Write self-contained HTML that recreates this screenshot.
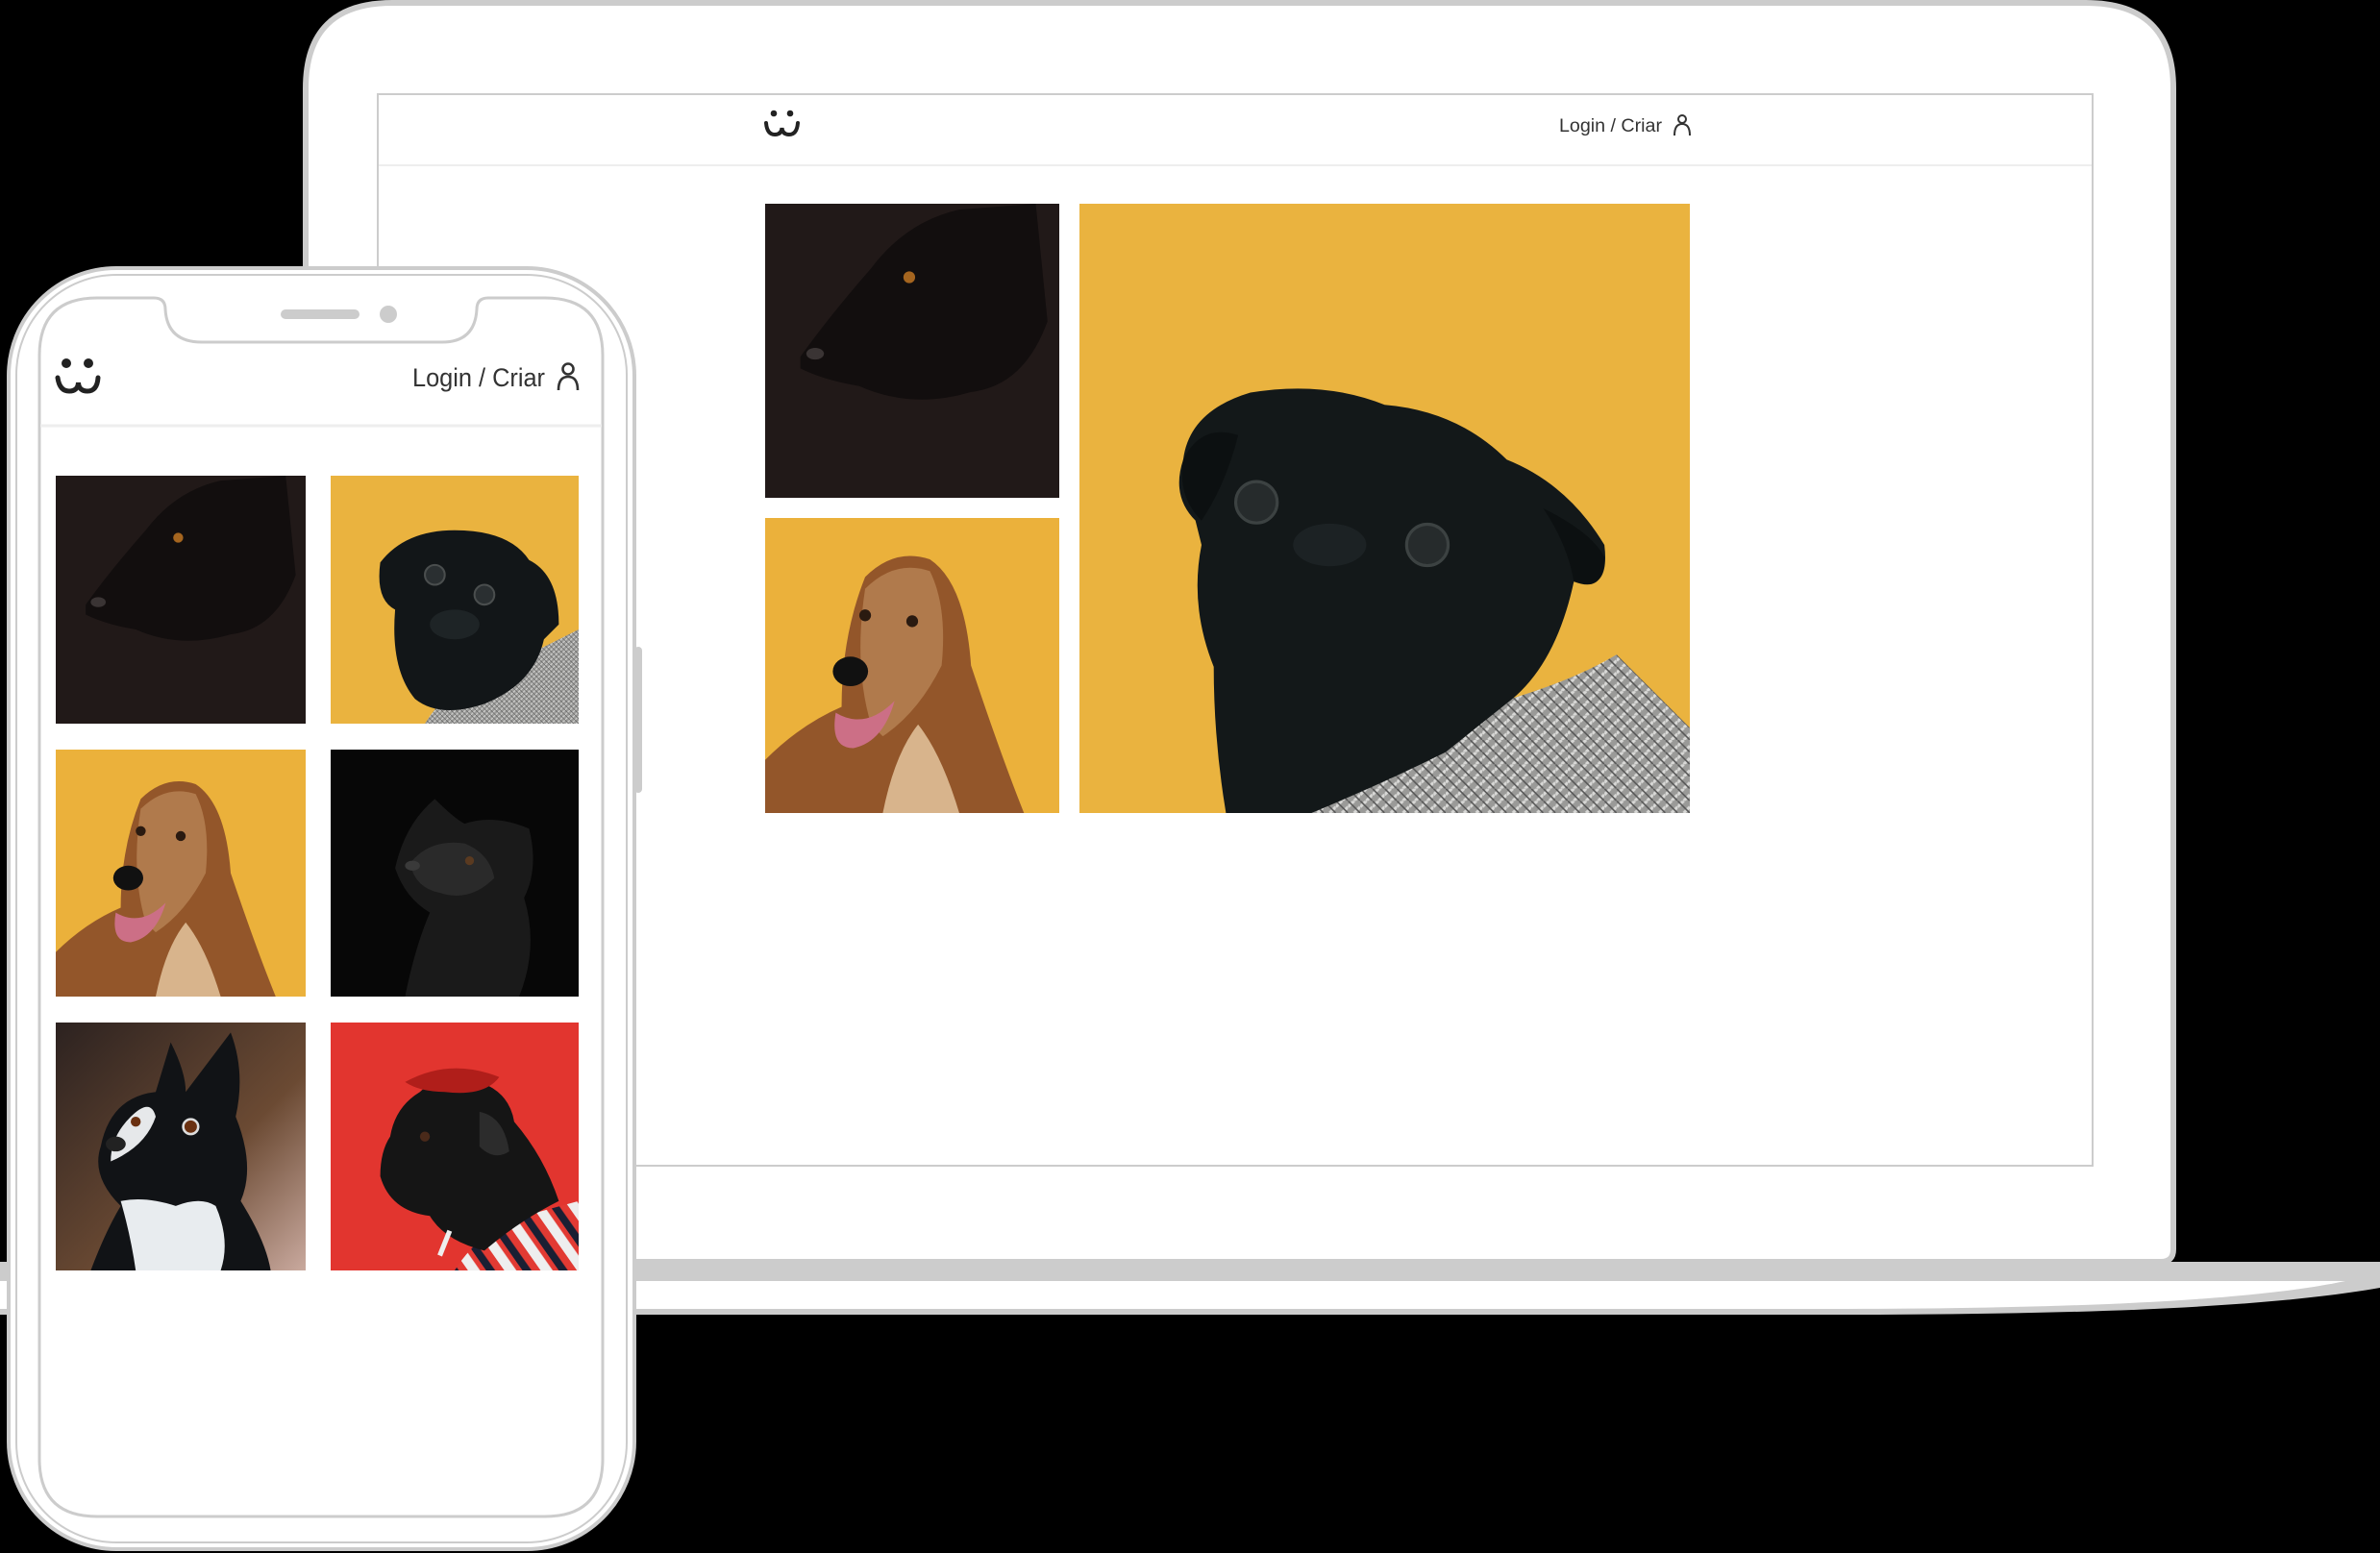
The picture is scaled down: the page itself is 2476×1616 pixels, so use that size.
<!DOCTYPE html>
<html><head><meta charset="utf-8"><style>html,body{margin:0;padding:0;background:#000;}svg{display:block}</style></head>
<body>
<svg width="2476" height="1616" viewBox="0 0 2476 1616" xmlns="http://www.w3.org/2000/svg" font-family="Liberation Sans, sans-serif">
<defs>
<pattern id="knit" width="2" height="2" patternUnits="userSpaceOnUse"><rect width="2" height="2" fill="#9a9a98"/><path d="M0 1 L1 0 M1 2 L2 1" stroke="#d8d8d6" stroke-width="0.5"/><path d="M0 0 L2 2" stroke="#555" stroke-width="0.25"/></pattern>
<pattern id="stripe" width="12" height="12" patternUnits="userSpaceOnUse" patternTransform="rotate(-35)"><rect width="12" height="12" fill="#e23a33"/><rect width="4" height="12" fill="#eee"/><rect x="6" width="3" height="12" fill="#1a1f33"/></pattern>

<g id="dogA">
<rect width="100" height="100" fill="#211918"/>
<path d="M12 52 Q22 38 36 22 Q48 6 66 2 L92 0 L96 40 Q88 62 70 64 Q50 70 32 62 Q20 60 12 56 Z" fill="#120e0e"/>
<circle cx="49" cy="25" r="2" fill="#a5651f"/>
<ellipse cx="17" cy="51" rx="3" ry="2" fill="#3a3434"/>
</g>
<g id="dogB">
<rect width="100" height="100" fill="#eab33f"/>
<path d="M38 100 Q50 80 80 72 L100 62 L100 100 Z" fill="url(#knit)"/>
<path d="M20 35 Q30 22 50 22 Q72 22 80 34 Q92 40 92 60 L86 66 Q82 84 62 92 Q44 98 34 90 Q24 78 26 54 Q18 50 20 35 Z" fill="#121618"/>
<circle cx="42" cy="40" r="4" fill="#2a2f31" stroke="#4a4e4e" stroke-width="0.8"/>
<circle cx="62" cy="48" r="4" fill="#2a2f31" stroke="#4a4e4e" stroke-width="0.8"/>
<ellipse cx="50" cy="60" rx="10" ry="6" fill="#1e2426"/>
</g>
<g id="dogC">
<rect width="100" height="100" fill="#ebb13b"/>
<path d="M0 100 L0 82 Q12 70 26 64 Q26 40 34 20 Q44 10 56 14 Q68 22 70 50 Q80 80 88 100 Z" fill="#93562a"/>
<path d="M36 70 Q30 50 34 24 Q44 14 56 18 Q62 30 60 50 Q52 66 40 74 Z" fill="#b07a4c"/>
<path d="M40 100 Q44 80 52 70 Q60 80 66 100 Z" fill="#d8b48c"/>
<ellipse cx="29" cy="52" rx="6" ry="5" fill="#111"/>
<circle cx="34" cy="33" r="2" fill="#2a1a10"/><circle cx="50" cy="35" r="2" fill="#2a1a10"/>
<path d="M24 66 Q34 72 44 62 Q40 76 30 78 Q22 78 24 66 Z" fill="#cc6f86"/>
</g>
<g id="dogD">
<rect width="100" height="100" fill="#070707"/>
<path d="M26 48 Q30 30 42 20 Q50 28 54 30 Q66 26 80 32 Q84 48 78 60 Q84 80 76 100 L30 100 Q34 80 40 66 Q30 60 26 48 Z" fill="#1a1a1a"/>
<path d="M32 46 Q40 36 54 38 Q64 42 66 52 Q56 62 44 58 Q34 56 32 46 Z" fill="#2a2a2a"/>
<circle cx="56" cy="45" r="1.8" fill="#5a3a20"/>
<ellipse cx="33" cy="47" rx="3" ry="2" fill="#3a3a3a"/>
</g>
<g id="dogE">
<defs><linearGradient id="gE" x1="0" y1="0" x2="1" y2="1"><stop offset="0" stop-color="#2c2220"/><stop offset="0.6" stop-color="#6b4a33"/><stop offset="1" stop-color="#c9a99e"/></linearGradient></defs>
<rect width="100" height="100" fill="url(#gE)"/>
<path d="M18 50 Q22 30 40 28 L46 8 Q52 20 52 28 L70 4 Q76 20 72 38 Q80 58 74 72 Q84 88 86 100 L14 100 Q20 84 26 74 Q14 62 18 50 Z" fill="#111316"/>
<path d="M26 72 Q36 70 48 74 Q58 70 64 74 Q70 88 66 100 L32 100 Q30 86 26 72 Z" fill="#e8ecef"/>
<path d="M30 38 Q38 30 40 38 Q36 50 22 56 Q22 46 30 38 Z" fill="#e6e8ea"/>
<circle cx="54" cy="42" r="3" fill="#6a3010" stroke="#ddd" stroke-width="1"/>
<circle cx="32" cy="40" r="2" fill="#6a3010"/>
<ellipse cx="24" cy="49" rx="4" ry="3" fill="#222"/>
</g>
<g id="dogF">
<rect width="100" height="100" fill="#e2352f"/>
<path d="M50 100 Q60 84 78 78 L100 72 L100 100 Z" fill="url(#stripe)"/>
<path d="M36 28 Q46 18 60 24 Q72 28 74 40 Q86 54 92 72 Q76 80 62 92 Q46 88 40 78 Q24 76 20 62 Q20 52 24 46 Q26 34 36 28 Z" fill="#151515"/>
<path d="M30 24 Q48 14 68 22 Q62 30 46 28 Q36 28 30 24 Z" fill="#b01e1a"/>
<path d="M60 36 Q70 38 72 52 Q66 56 60 50 Z" fill="#2c2c2c"/>
<circle cx="38" cy="46" r="2" fill="#4a2a1a"/>
<path d="M48 84 L44 94" stroke="#eee" stroke-width="2"/>
</g>
</defs>

<rect width="2476" height="1616" fill="#000"/>

<!-- Laptop -->
<path d="M0 1313 L2476 1313 L2476 1340 C2350 1362 2150 1368 1900 1368 L0 1368 Z" fill="#cccccc"/>
<path d="M0 1333 L2440 1333 C2340 1354 2150 1362 1900 1362 L0 1362 Z" fill="#fff"/>
<path d="M318 1313 L318 92 Q318 3 408 3 L2170 3 Q2261 3 2261 92 L2261 1300 Q2261 1313 2248 1313 Z" fill="#fff" stroke="#cccccc" stroke-width="6"/>
<rect x="393" y="98" width="1784" height="1115" fill="#fff" stroke="#cccccc" stroke-width="2"/>
<line x1="394" y1="172" x2="2176" y2="172" stroke="#eeeeee" stroke-width="2"/>
<circle cx="805" cy="118" r="3.3" fill="#222"/><circle cx="822" cy="118" r="3.3" fill="#222"/>
<path d="M797 128 Q798 140 806 140 Q813 140 813.5 133 Q814 140 821 140 Q829 140 830 128" fill="none" stroke="#222" stroke-width="4" stroke-linecap="round"/>
<text x="1622" y="137" font-size="19" fill="#333" textLength="107" lengthAdjust="spacingAndGlyphs">Login / Criar</text>
<circle cx="1750" cy="124" r="4" fill="none" stroke="#333" stroke-width="2"/>
<path d="M1742 141 Q1742 129 1750 129 Q1758 129 1758 141" fill="none" stroke="#333" stroke-width="2"/>
<svg x="796" y="212" width="306" height="306" viewBox="0 0 100 100" preserveAspectRatio="none"><use href="#dogA"/></svg>
<svg x="796" y="539" width="306" height="307" viewBox="0 0 100 100" preserveAspectRatio="none"><use href="#dogC"/></svg>
<svg x="1123" y="212" width="635" height="634" viewBox="0 0 100 100" preserveAspectRatio="none">
<rect width="100" height="100" fill="#eab33f"/>
<path d="M26 100 Q40 90 60 84 Q78 80 88 74 L100 86 L100 100 Z" fill="url(#knit)"/>
<path d="M17 42 Q18 34 28 31 Q40 29 50 33 Q62 34 70 42 Q80 46 86 56 Q87 64 81 62 Q78 76 70 82 L60 90 Q50 95 38 100 L24 100 Q22 88 22 76 Q18 66 20 56 L19 52 Q15 48 17 42 Z" fill="#131819"/>
<path d="M17 42 Q20 36 26 38 Q24 46 20 52 Q16 48 17 42 Z" fill="#0c1011"/>
<path d="M76 50 Q84 54 86 58 Q86 64 81 62 Q80 56 76 50 Z" fill="#0c1011"/>
<circle cx="29" cy="49" r="3.4" fill="#262b2c" stroke="#3c4242" stroke-width="0.5"/>
<circle cx="57" cy="56" r="3.4" fill="#262b2c" stroke="#3c4242" stroke-width="0.5"/>
<ellipse cx="41" cy="56" rx="6" ry="3.5" fill="#1c2224"/>
</svg>

<!-- Phone -->
<rect x="660" y="673" width="8" height="152" rx="4" fill="#cccccc"/>
<rect x="9" y="279" width="651" height="1333" rx="112" fill="#fff" stroke="#cccccc" stroke-width="4"/>
<rect x="17" y="286" width="635" height="1319" rx="104" fill="none" stroke="#cccccc" stroke-width="2"/>
<path d="M41 1518 L41 370 Q41 310 101 310 L160 310 Q172 310 172 322 Q174 356 210 356 L460 356 Q494 356 496 322 Q496 310 508 310 L567 310 Q627 310 627 370 L627 1518 Q627 1578 567 1578 L101 1578 Q41 1578 41 1518 Z" fill="#fff" stroke="#cccccc" stroke-width="3"/>
<rect x="292" y="322" width="82" height="10" rx="5" fill="#cccccc"/>
<circle cx="404" cy="327" r="9" fill="#cccccc"/>
<line x1="42" y1="443" x2="626" y2="443" stroke="#eeeeee" stroke-width="3"/>
<circle cx="69" cy="378" r="5" fill="#222"/><circle cx="92" cy="378" r="5" fill="#222"/>
<path d="M60 393 Q62 407 72 407 Q81 407 81.5 398 Q82 407 91 407 Q101 407 102 393" fill="none" stroke="#222" stroke-width="5" stroke-linecap="round"/>
<text x="429" y="402" font-size="27" fill="#333" textLength="138" lengthAdjust="spacingAndGlyphs">Login / Criar</text>
<circle cx="591" cy="384" r="5.5" fill="none" stroke="#333" stroke-width="2.6"/>
<path d="M581 406 Q581 392 591 392 Q601 392 601 406" fill="none" stroke="#333" stroke-width="2.6"/>
<svg x="58" y="495" width="260" height="258" viewBox="0 0 100 100" preserveAspectRatio="none"><use href="#dogA"/></svg>
<svg x="344" y="495" width="258" height="258" viewBox="0 0 100 100" preserveAspectRatio="none"><use href="#dogB"/></svg>
<svg x="58" y="780" width="260" height="257" viewBox="0 0 100 100" preserveAspectRatio="none"><use href="#dogC"/></svg>
<svg x="344" y="780" width="258" height="257" viewBox="0 0 100 100" preserveAspectRatio="none"><use href="#dogD"/></svg>
<svg x="58" y="1064" width="260" height="258" viewBox="0 0 100 100" preserveAspectRatio="none"><use href="#dogE"/></svg>
<svg x="344" y="1064" width="258" height="258" viewBox="0 0 100 100" preserveAspectRatio="none"><use href="#dogF"/></svg>
</svg>
</body></html>
